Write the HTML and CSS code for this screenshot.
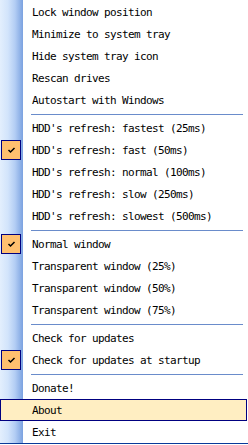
FILE: index.html
```html
<!DOCTYPE html>
<html lang="en">
<head>
    <meta charset="UTF-8">
    <title>Tray menu</title>
    <link rel="stylesheet" href="styles.css">
</head>
<body>
    <div class="menu">
        <div class="item"><span class="label">Lock window position</span></div>
        <div class="item"><span class="label">Minimize to system tray</span></div>
        <div class="item"><span class="label">Hide system tray icon</span></div>
        <div class="item"><span class="label">Rescan drives</span></div>
        <div class="item"><span class="label">Autostart with Windows</span></div>
        <div class="sep"></div>
        <div class="item"><span class="label">HDD's refresh: fastest (25ms)</span></div>
        <div class="item checked">
            <span class="check"><svg width="9" height="7" viewBox="0 0 9 7"><path d="M1.5 3 L3.5 5 L7.5 1" fill="none" stroke="#000" stroke-width="1.5"/></svg></span>
            <span class="label">HDD's refresh: fast (50ms)</span>
        </div>
        <div class="item"><span class="label">HDD's refresh: normal (100ms)</span></div>
        <div class="item"><span class="label">HDD's refresh: slow (250ms)</span></div>
        <div class="item"><span class="label">HDD's refresh: slowest (500ms)</span></div>
        <div class="sep"></div>
        <div class="item checked">
            <span class="check"><svg width="9" height="7" viewBox="0 0 9 7"><path d="M1.5 3 L3.5 5 L7.5 1" fill="none" stroke="#000" stroke-width="1.5"/></svg></span>
            <span class="label">Normal window</span>
        </div>
        <div class="item"><span class="label">Transparent window (25%)</span></div>
        <div class="item"><span class="label">Transparent window (50%)</span></div>
        <div class="item"><span class="label">Transparent window (75%)</span></div>
        <div class="sep"></div>
        <div class="item"><span class="label">Check for updates</span></div>
        <div class="item checked">
            <span class="check"><svg width="9" height="7" viewBox="0 0 9 7"><path d="M1.5 3 L3.5 5 L7.5 1" fill="none" stroke="#000" stroke-width="1.5"/></svg></span>
            <span class="label">Check for updates at startup</span>
        </div>
        <div class="sep"></div>
        <div class="item"><span class="label">Donate!</span></div>
        <div class="item hover"><span class="label">About</span></div>
        <div class="item"><span class="label">Exit</span></div>
    </div>
</body>
</html>
```

FILE: styles.css
```css
body {
    margin: 0;
    background-color: #fff;
    font-family: "DejaVu Sans Mono", "Liberation Mono", monospace;
    font-size: 11px;
    color: #000;
}
.menu {
    width: 248px;
    padding-top: 1px;
    border-bottom: 1px solid #0a3a9a;
    background: linear-gradient(to right, #e3effd 0, #d2e4fb 8px, #b3cdf4 15px, #7ba2e0 23px, #fff 23px);
}
.item {
    position: relative;
    height: 22px;
    display: flex;
    align-items: center;
    box-sizing: border-box;
}
.label {
    padding-left: 32px;
    letter-spacing: -0.62px;
    white-space: nowrap;
}
.item.hover {
    margin-right: 1px;
    background-color: #ffeec2;
    border: 1px solid #000080;
}
.item.hover .label {
    padding-left: 31px;
}
.check {
    position: absolute;
    left: 1px;
    top: 1px;
    width: 20px;
    height: 20px;
    box-sizing: border-box;
    background-color: #ffc06f;
    border: 1px solid #000080;
    display: flex;
    align-items: center;
    justify-content: center;
}
.sep {
    height: 6px;
    display: flex;
    align-items: center;
}
.sep::after {
    content: "";
    margin-left: 31px;
    margin-right: 5px;
    flex: 1;
    border-top: 1px solid #6a8ccb;
}
```
